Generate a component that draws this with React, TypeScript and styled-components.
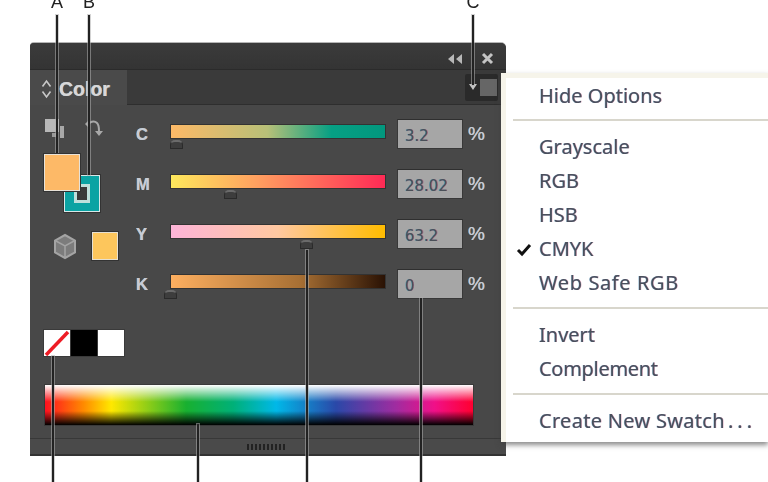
import styled, { createGlobalStyle } from "styled-components";

const GlobalStyle = createGlobalStyle`
    html, body {
        margin: 0;
        padding: 0;
        background: #ffffff;
    }
    body {
        font-family: "Liberation Sans", Arial, sans-serif;
    }
`;

const Page = styled.div`
    position: relative;
    width: 768px;
    height: 482px;
    padding: 43px 0 0 30px;
    box-sizing: border-box;
    overflow: hidden;
    background: #ffffff;
    filter: blur(0.55px);
`;

const Panel = styled.div`
    width: 476px;
    height: 413px;
    display: flex;
    flex-direction: column;
    background: #484848;
    border-radius: 4px 5px 0 0;
    box-shadow: 0 -1px 0 #b5b5b5;
    border-bottom: 2px solid #333333;
    box-sizing: border-box;
`;

const TitleBar = styled.div`
    height: 27px;
    display: flex;
    align-items: center;
    justify-content: flex-end;
    gap: 18px;
    padding: 5px 12px 0 0;
    box-sizing: border-box;
    background: linear-gradient(#3b3b3b, #343434);
    border-radius: 4px 5px 0 0;
    border-bottom: 1px solid #2b2b2b;
`;

const TabRow = styled.div`
    height: 35px;
    display: flex;
    background: #3a3a3a;
`;

const Tab = styled.div`
    width: 97px;
    display: flex;
    align-items: center;
    gap: 7px;
    padding: 3px 0 0 11px;
    box-sizing: border-box;
    background: #4a4a4a;
    color: #d8d8d8;
    font-size: 19.5px;
    font-weight: bold;
    text-shadow: -0.6px 0 rgba(110, 190, 255, 0.7), 0.6px 0 rgba(255, 170, 90, 0.7);
`;

const TabFill = styled.div`
    flex: 1;
    display: flex;
    justify-content: flex-end;
    align-items: center;
    padding-right: 8px;
    border-bottom: 1px solid #2e2e2e;
`;

const MenuButton = styled.div`
    width: 33px;
    height: 27px;
    display: flex;
    align-items: center;
    justify-content: flex-end;
    gap: 2px;
    padding-right: 1px;
    box-sizing: border-box;
    background: #2a2a2a;
    border-radius: 2px;
`;

const MenuSquare = styled.div`
    width: 17px;
    height: 17px;
    background: #666666;
`;

const Main = styled.div`
    display: flex;
    padding-left: 14px;
    height: 280px;
`;

const LeftColumn = styled.div`
    width: 92px;
    padding-top: 13px;
    box-sizing: border-box;
`;

const ToolIcons = styled.div`
    height: 20px;
    display: flex;
    gap: 18px;
    margin-bottom: 16px;
`;

const SwatchStack = styled.div`
    position: relative;
    width: 56px;
    height: 58px;
`;

const FrontSwatch = styled.div`
    position: absolute;
    left: 0;
    top: 0;
    width: 36px;
    height: 37px;
    box-sizing: border-box;
    background: #fdb967;
    border: 1px solid #e8e2d8;
    box-shadow: 0 0 0 1px #333333;
    z-index: 1;
`;

const BackSwatch = styled.div`
    position: absolute;
    left: 20px;
    top: 21px;
    width: 36px;
    height: 37px;
    box-sizing: border-box;
    background: #0ba3a3;
    border: 1px solid #d8e8e8;
    box-shadow: 0 0 0 1px #333333;
    display: flex;
    align-items: center;
    justify-content: center;
`;

const BackHole = styled.div`
    width: 16px;
    height: 19px;
    box-sizing: border-box;
    background: #3a3a3a;
    border: 3px solid #bfe0dc;
`;

const GamutRow = styled.div`
    display: flex;
    align-items: center;
    gap: 15px;
    height: 28px;
    margin: 20px 0 0 9px;
`;

const GamutSwatch = styled.div`
    width: 26px;
    height: 28px;
    box-sizing: border-box;
    background: #fdc65c;
    border: 1px solid #e6e0d2;
    box-shadow: 0 0 0 1px #333333;
`;

const QuickRow = styled.div`
    display: flex;
    gap: 1px;
    margin-top: 70px;
`;

const QuickSwatch = styled.div<{ $color: string }>`
    width: 26px;
    height: 26px;
    background: ${(props) => props.$color};
    box-shadow: 0 0 0 1px #3a3a3a;
`;

const RightColumn = styled.div`
    flex: 1;
    padding-top: 4px;
`;

const SliderRow = styled.div`
    height: 50px;
    display: flex;
    align-items: center;
`;

const ChannelLabel = styled.div`
    width: 35px;
    color: #c8cdd4;
    font-size: 16.5px;
    font-weight: bold;
    text-shadow: -0.6px 0 rgba(90, 180, 255, 0.7), 0.6px 0 rgba(255, 170, 90, 0.7);
`;

const Track = styled.div<{ $gradient: string }>`
    position: relative;
    width: 214px;
    height: 13px;
    margin-bottom: 5px;
    background: ${(props) => props.$gradient};
    box-shadow: 0 0 0 1px #333333;
`;

const Knob = styled.div<{ $left: number }>`
    position: absolute;
    left: ${(props) => props.$left}px;
    top: 15px;
    width: 13px;
    height: 9px;
    box-sizing: border-box;
    background: #3d3d3d;
    border: 1px solid #2a2a2a;
    border-top: 2px solid #6b6b6b;
    border-radius: 5px 5px 1px 1px;
`;

const ValueBox = styled.div`
    width: 66px;
    height: 30px;
    margin-left: 12px;
    padding: 4px 0 0 7px;
    box-sizing: border-box;
    display: flex;
    align-items: center;
    background: #a6a6a6;
    border: 1px solid #383838;
    border-top-color: #2f2f2f;
    color: #4a5058;
    font-family: "DejaVu Sans", sans-serif;
    font-size: 15px;
    text-shadow: -0.6px 0 rgba(0, 130, 170, 0.5), 0.6px 0 rgba(170, 60, 110, 0.5);
`;

const Percent = styled.div`
    margin-left: 5px;
    color: #c8cdd4;
    font-size: 19px;
    text-shadow: -0.6px 0 rgba(90, 180, 255, 0.7), 0.6px 0 rgba(255, 170, 90, 0.7);
`;

const Spectrum = styled.div`
    width: 428px;
    height: 40px;
    margin-left: 15px;
    box-shadow: 0 0 0 1px #3a3a3a;
    background:
        linear-gradient(#ffffff 0%, rgba(255, 255, 255, 0) 42%, rgba(0, 0, 0, 0) 65%, #000000 100%),
        linear-gradient(
            to right,
            #ff1020 0%,
            #ff8a00 9%,
            #ffe800 15.5%,
            #18b030 33%,
            #00b078 44%,
            #00b8e8 54%,
            #2a48a8 68%,
            #a02ca0 82%,
            #f01088 91%,
            #ff0030 100%
        );
`;

const Footer = styled.div`
    margin-top: 13px;
    flex: 1;
    display: flex;
    align-items: center;
    justify-content: center;
    border-top: 1px solid #383838;
    background: #4a4a4a;
    padding-right: 2px;
`;

const Grip = styled.div`
    width: 40px;
    height: 6px;
    background: repeating-linear-gradient(to right, #222222 0 2px, transparent 2px 4px);
`;

const Menu = styled.div`
    position: absolute;
    left: 501px;
    top: 73px;
    width: 267px;
    height: 369px;
    box-sizing: border-box;
    padding: 1px 0 0 7px;
    background: #ffffff;
    border-top: 5px solid #f6f4ea;
    border-left: 5px solid #f6f4ea;
    box-shadow: 0 3px 5px rgba(60, 60, 60, 0.6);
`;

const MenuItem = styled.div<{ $spacing?: number }>`
    position: relative;
    height: 34px;
    line-height: 34px;
    padding-left: 26px;
    color: #4a505c;
    font-family: "Noto Sans", sans-serif;
    font-size: 20px;
    letter-spacing: ${(props) => props.$spacing ?? 0}px;
    text-shadow: -0.5px 0 rgba(60, 140, 190, 0.45), 0.5px 0 rgba(190, 70, 120, 0.45);
    white-space: nowrap;
`;

const Dots = styled.span`
    letter-spacing: 4px;
    margin-left: 3px;
`;

const Check = styled.svg`
    position: absolute;
    left: 3px;
    top: 11px;
`;

const Separator = styled.div<{ $top?: number }>`
    height: 2px;
    margin: ${(props) => props.$top ?? 6}px 0 9px;
    background: #d8d6cc;
`;

const Letter = styled.div<{ $x: number }>`
    position: absolute;
    left: ${(props) => props.$x}px;
    top: -8px;
    width: 20px;
    text-align: center;
    color: #222222;
    font-size: 18px;
`;

const Callout = styled.div<{ $x: number; $top: number; $height: number }>`
    position: absolute;
    left: ${(props) => props.$x}px;
    top: ${(props) => props.$top}px;
    width: 2px;
    height: ${(props) => props.$height}px;
    background: #222222;
    box-shadow: 0 0 0 1px rgba(175, 175, 175, 0.55);
`;

const sliders = [
    { label: "C", value: "3.2", knob: -1, gradient: "linear-gradient(to right, #fdb967, #b8c078 45%, #06a084 75%, #02987e)" },
    { label: "M", value: "28.02", knob: 53, gradient: "linear-gradient(to right, #fde85c, #ffa060 40%, #ff2a55)" },
    { label: "Y", value: "63.2", knob: 129, gradient: "linear-gradient(to right, #fdb4d8, #ffc8a0 50%, #ffbc00)" },
    { label: "K", value: "0", knob: -7, gradient: "linear-gradient(to right, #fdaf60, #a87034 60%, #2a1204)" },
];

function App() {
    return (
        <>
            <GlobalStyle />
            <Page>
                <Panel>
                    <TitleBar>
                        <svg width="16" height="12" viewBox="0 0 16 12">
                            <path d="M7 1v10L1 6zM15 1v10L9 6z" fill="#b8b8b8" />
                        </svg>
                        <svg width="13" height="13" viewBox="0 0 13 13">
                            <path d="M2 2l9 9M11 2l-9 9" stroke="#c4c4c4" strokeWidth="3" />
                        </svg>
                    </TitleBar>
                    <TabRow>
                        <Tab>
                            <svg width="11" height="20" viewBox="0 0 11 20">
                                <path d="M1.5 7.5L5.5 2l4 5.5M1.5 12.5l4 5.5 4-5.5" fill="none" stroke="#c8c8c8" strokeWidth="1.6" />
                            </svg>
                            Color
                        </Tab>
                        <TabFill>
                            <MenuButton>
                                <svg width="10" height="8" viewBox="0 0 10 8">
                                    <path d="M1 1h8L5 7z" fill="#c4c4c4" />
                                </svg>
                                <MenuSquare />
                            </MenuButton>
                        </TabFill>
                    </TabRow>
                    <Main>
                        <LeftColumn>
                            <ToolIcons>
                                <svg width="22" height="21" viewBox="0 0 22 21">
                                    <rect x="1" y="1" width="14" height="13" fill="#b8b8b8" />
                                    <rect x="8" y="15" width="6" height="4" fill="#9a9a9a" />
                                    <rect x="16" y="8" width="4" height="12" fill="#a8a8a8" />
                                </svg>
                                <svg width="20" height="20" viewBox="0 0 20 20">
                                    <path d="M4 7c1-3 6-5 9-2 2 2 2 6 2 8" fill="none" stroke="#a8a8a8" strokeWidth="2" />
                                    <path d="M1 6l4-4v8zM11 13h8l-4 5z" fill="#a8a8a8" />
                                </svg>
                            </ToolIcons>
                            <SwatchStack>
                                <FrontSwatch />
                                <BackSwatch>
                                    <BackHole />
                                </BackSwatch>
                            </SwatchStack>
                            <GamutRow>
                                <svg width="24" height="27" viewBox="0 0 24 27">
                                    <path d="M12 2l10 5.5v12L12 25 2 19.5v-12z" fill="#7c7c7c" stroke="#a4a4a4" strokeWidth="2" />
                                    <path d="M2 7.5l10 5.5 10-5.5M12 13v12" fill="none" stroke="#a4a4a4" strokeWidth="1.5" />
                                </svg>
                                <GamutSwatch />
                            </GamutRow>
                            <QuickRow>
                                <QuickSwatch $color="#ffffff">
                                    <svg width="26" height="26" viewBox="0 0 26 26">
                                        <path d="M2 25L24 2" stroke="#ee1c25" strokeWidth="3.5" />
                                    </svg>
                                </QuickSwatch>
                                <QuickSwatch $color="#000000" />
                                <QuickSwatch $color="#ffffff" />
                            </QuickRow>
                        </LeftColumn>
                        <RightColumn>
                            {sliders.map((slider) => (
                                <SliderRow key={slider.label}>
                                    <ChannelLabel>{slider.label}</ChannelLabel>
                                    <Track $gradient={slider.gradient}>
                                        <Knob $left={slider.knob} />
                                    </Track>
                                    <ValueBox>{slider.value}</ValueBox>
                                    <Percent>%</Percent>
                                </SliderRow>
                            ))}
                        </RightColumn>
                    </Main>
                    <Spectrum />
                    <Footer>
                        <Grip />
                    </Footer>
                </Panel>

                <Menu>
                    <MenuItem>Hide Options</MenuItem>
                    <Separator />
                    <MenuItem>Grayscale</MenuItem>
                    <MenuItem>RGB</MenuItem>
                    <MenuItem>HSB</MenuItem>
                    <MenuItem>
                        <Check width="16" height="14" viewBox="0 0 16 14">
                            <path d="M2 7l4 4 8-9" fill="none" stroke="#111111" strokeWidth="3" />
                        </Check>
                        CMYK
                    </MenuItem>
                    <MenuItem $spacing={0.6}>Web Safe RGB</MenuItem>
                    <Separator $top={7} />
                    <MenuItem>Invert</MenuItem>
                    <MenuItem $spacing={-0.3}>Complement</MenuItem>
                    <Separator $top={7} />
                    <MenuItem $spacing={0.3}>
                        Create New Swatch<Dots>...</Dots>
                    </MenuItem>
                </Menu>

                <Letter $x={47}>A</Letter>
                <Letter $x={79}>B</Letter>
                <Letter $x={463}>C</Letter>
                <Callout $x={56} $top={15} $height={140} />
                <Callout $x={88} $top={15} $height={160} />
                <Callout $x={472} $top={15} $height={70} />
                <Callout $x={52} $top={356} $height={126} />
                <Callout $x={197} $top={424} $height={58} />
                <Callout $x={306} $top={250} $height={232} />
                <Callout $x={420} $top={298} $height={184} />
            </Page>
        </>
    );
}

export default App;
